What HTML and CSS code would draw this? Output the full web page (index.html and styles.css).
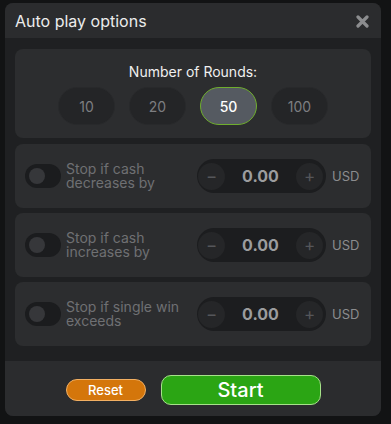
FILE: index.html
```html
<!DOCTYPE html>
<html>
<head>
<meta charset="utf-8">
<link rel="stylesheet" href="styles.css">
</head>
<body>
<div class="modal">
  <div class="header">
    <span class="title">Auto play options</span>
    <svg class="close" width="13" height="13" viewBox="0 0 13 13"><path d="M2 2 L11 11 M11 2 L2 11" stroke="#8c8d8f" stroke-width="3.2" stroke-linecap="round"/></svg>
  </div>
  <div class="content">
    <div class="panel rounds">
      <div class="rounds-label">Number of Rounds:</div>
      <div class="round-list">
        <div class="round">10</div>
        <div class="round">20</div>
        <div class="round active">50</div>
        <div class="round">100</div>
      </div>
    </div>
    <div class="panel stop">
      <div class="toggle"><div class="knob"></div></div>
      <div class="stop-label">Stop if cash decreases by</div>
      <div class="stepper">
        <div class="step-btn">−</div>
        <div class="value">0.00</div>
        <div class="step-btn">+</div>
      </div>
      <div class="currency">USD</div>
    </div>
    <div class="panel stop">
      <div class="toggle"><div class="knob"></div></div>
      <div class="stop-label">Stop if cash increases by</div>
      <div class="stepper">
        <div class="step-btn">−</div>
        <div class="value">0.00</div>
        <div class="step-btn">+</div>
      </div>
      <div class="currency">USD</div>
    </div>
    <div class="panel stop">
      <div class="toggle"><div class="knob"></div></div>
      <div class="stop-label">Stop if single win exceeds</div>
      <div class="stepper">
        <div class="step-btn">−</div>
        <div class="value">0.00</div>
        <div class="step-btn">+</div>
      </div>
      <div class="currency">USD</div>
    </div>
  </div>
  <div class="footer">
    <div class="btn reset">Reset</div>
    <div class="btn start">Start</div>
  </div>
</div>
</body>
</html>
```
FILE: styles.css
```css
* { box-sizing: border-box; }
html, body { margin: 0; padding: 0; }
body {
  background: #121314;
  font-family: Inter, "Noto Sans", sans-serif;
  width: 391px;
  height: 424px;
  overflow: hidden;
  padding-top: 3px;
  padding-left: 5px;
}
.modal {
  width: 376px;
  height: 413px;
  border-radius: 8px;
  overflow: hidden;
  background: #1f2022;
  display: flex;
  flex-direction: column;
}
.header {
  height: 35px;
  background: #2b2c2e;
  display: flex;
  align-items: center;
  justify-content: space-between;
  padding: 0 12px 0 10px;
}
.title {
  color: #ececec;
  font-size: 16px;
  font-weight: 400;
}
.close { margin-top: 2px; }
.content {
  padding: 11px 10px 15px;
  display: flex;
  flex-direction: column;
  gap: 5px;
  height: 323px;
}
.panel {
  background: #2c2d2f;
  border-radius: 8px;
}
.rounds {
  padding: 14px 0 12px;
  margin-bottom: 1px;
  height: 89px;
}
.rounds-label {
  color: #f0f0f0;
  font-size: 14px;
  font-weight: 400;
  text-align: center;
  line-height: 17px;
}
.round-list {
  display: flex;
  justify-content: center;
  gap: 14px;
  margin-top: 7px;
}
.round {
  width: 57px;
  height: 38px;
  border-radius: 19px;
  background: #242527;
  border: 1px solid #28292b;
  color: #7d7e81;
  font-size: 14px;
  display: flex;
  align-items: center;
  justify-content: center;
}
.round.active {
  background: #555a61;
  border: 1px solid #6fae2e;
  color: #ffffff;
  font-weight: 500;
}
.stop {
  height: 64px;
  display: flex;
  align-items: center;
  padding: 0 10px;
}
.toggle {
  width: 36px;
  height: 24px;
  border-radius: 12px;
  background: #1b1c1e;
  padding: 4px;
  flex-shrink: 0;
}
.knob {
  width: 16px;
  height: 16px;
  border-radius: 50%;
  background: #36373a;
}
.stop-label {
  margin-left: 5px;
  width: 131px;
  padding-right: 5px;
  color: #6f7073;
  font-size: 14px;
  line-height: 14px;
}
.stepper {
  width: 129px;
  height: 34px;
  border-radius: 17px;
  background: #1c1d1f;
  display: flex;
  align-items: center;
  justify-content: space-between;
  padding: 0 3px 0 1px;
}
.step-btn {
  width: 27px;
  height: 27px;
  border-radius: 50%;
  background: #252628;
  color: #55565a;
  font-size: 17px;
  display: flex;
  align-items: center;
  justify-content: center;
  line-height: 1;
}
.value {
  color: #9b9c9e;
  font-size: 16px;
  font-weight: 700;
}
.currency {
  margin-left: 6px;
  color: #8b8c8e;
  font-size: 13px;
}
.footer {
  flex: 1;
  background: #2b2c2e;
  display: flex;
  align-items: center;
  justify-content: center;
  gap: 15px;
  padding-top: 2px;
}
.btn {
  display: flex;
  align-items: center;
  justify-content: center;
  color: #ffffff;
}
.reset {
  width: 80px;
  height: 22px;
  border-radius: 11px;
  background: #d4760b;
  border: 1px solid #f2b063;
  font-size: 13px;
  font-weight: 500;
}
.start {
  width: 160px;
  height: 30px;
  border-radius: 10px;
  background: #2ba514;
  border: 1px solid #a6e28a;
  font-size: 20px;
  font-weight: 500;
}
```
